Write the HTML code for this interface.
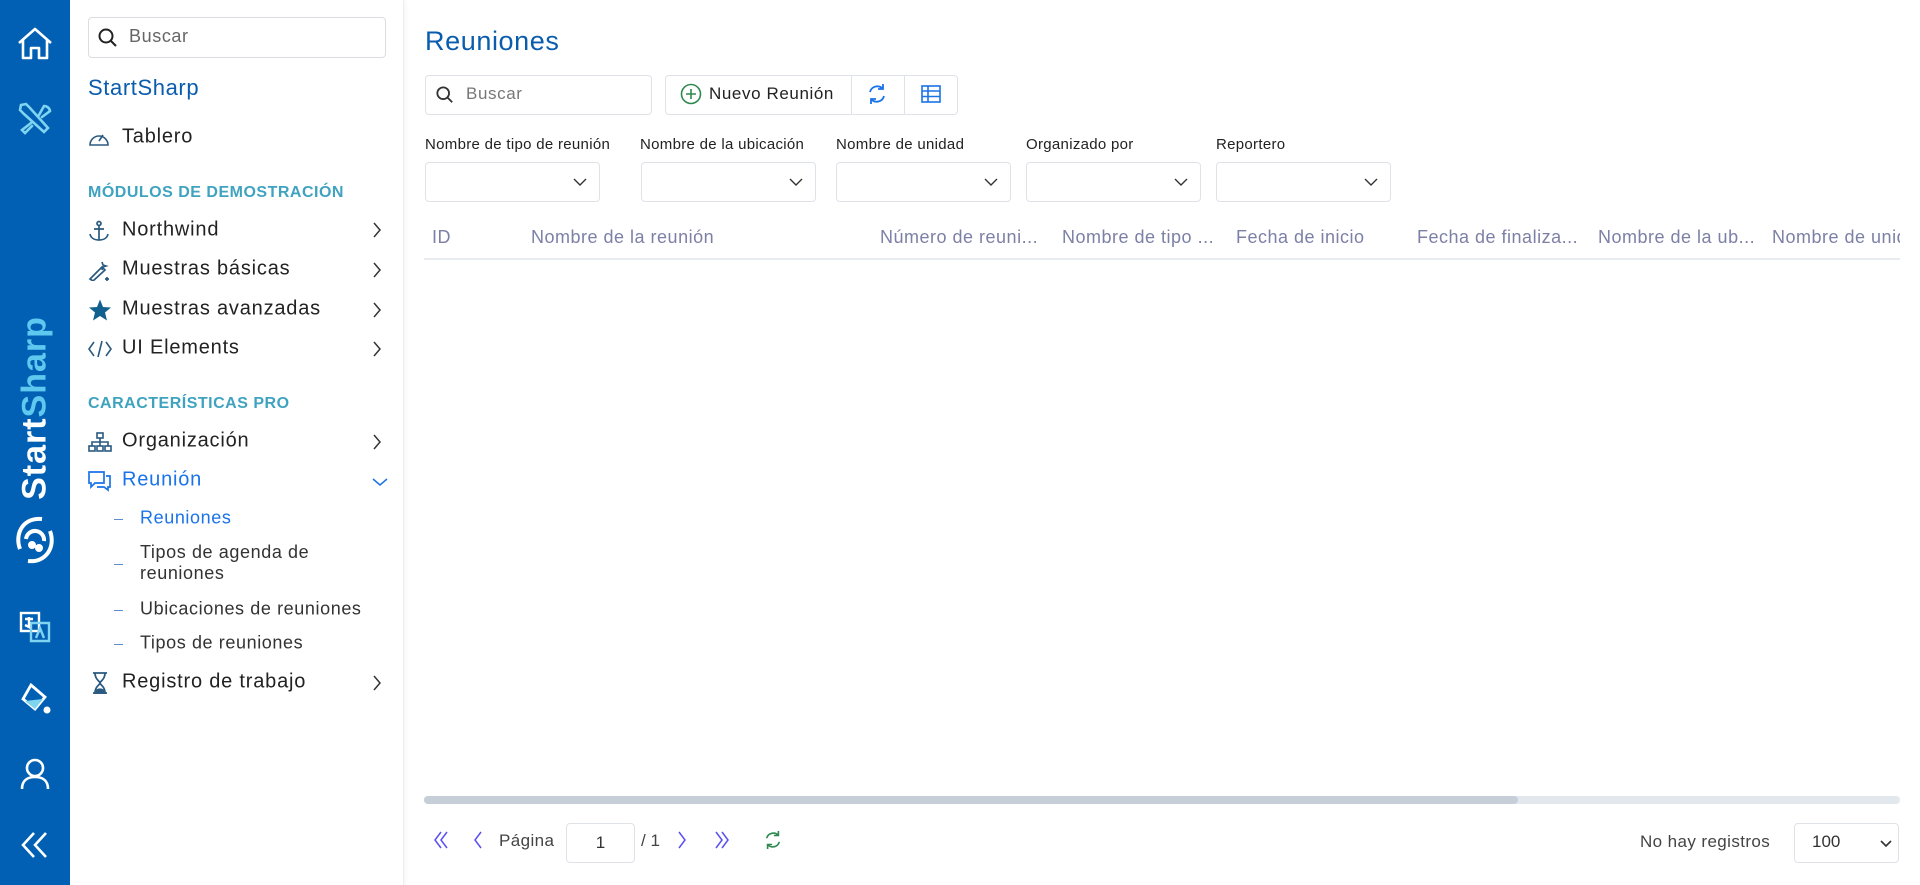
<!DOCTYPE html>
<html><head><meta charset="utf-8">
<style>
*{box-sizing:border-box;margin:0;padding:0}
body{width:1920px;height:885px;overflow:hidden;background:#fff;font-family:"Liberation Sans",sans-serif;position:relative;color:#222}
.abs{position:absolute}
#bar{left:0;top:0;width:70px;height:885px;background:#0160b4}
#side{left:70px;top:0;width:334px;height:885px;background:#fff;border-right:1px solid #eceef2;box-shadow:2px 0 4px rgba(0,0,0,.04)}
.item{position:absolute;left:122px;font-size:20px;letter-spacing:.8px;color:#222;white-space:nowrap;transform:translateY(-50%)}
.ico{position:absolute;left:88px;transform:translateY(-50%)}
.chev{position:absolute;left:372px;transform:translateY(-50%)}
.sec{position:absolute;left:88px;font-size:16px;font-weight:bold;color:#3fa3c0;transform:translateY(-50%);letter-spacing:.5px}
.sub{position:absolute;left:140px;font-size:18px;letter-spacing:.6px;color:#333;transform:translateY(-50%);line-height:21px}
.dash{position:absolute;left:114px;width:9px;height:1px;background:#5b8ed0}
.lbl{position:absolute;top:136px;font-size:15px;letter-spacing:.3px;color:#222;white-space:nowrap}
.sel{position:absolute;top:162px;height:40px;width:175px;border:1px solid #dfe2e6;border-radius:4px}
.sel svg{position:absolute;right:12px;top:14px}
.th{position:absolute;top:227px;font-size:18px;letter-spacing:.5px;color:#7c80a6;white-space:nowrap}
</style></head><body>
<div id="bar" class="abs">
 <svg class="abs" style="left:17px;top:27px" width="36" height="34" viewBox="0 0 36 34" fill="none" stroke="#fff" stroke-width="2.6" stroke-linejoin="round"><path d="M2 16 L18 2 L34 16 M6 13 V31 H14 V21 H22 V31 H30 V13"/></svg>
 <svg class="abs" style="left:17px;top:101px" width="36" height="36" viewBox="0 0 36 36" fill="none" stroke="#7fd4f0" stroke-width="2.6" stroke-linecap="round"><path d="M4 4 L9 3 L13 7 L31 27 L27 31 L7 13 L3 9Z M22 14 L27 5 a6 6 0 0 1 6 5 L25 16 M14 22 L5 29 L8 32 L15 25"/></svg>
 <div class="abs" style="left:35px;top:408px;transform:translate(-50%,-50%) rotate(-90deg);font-size:34px;letter-spacing:1px;font-weight:bold;white-space:nowrap;color:#fff">Start<span style="color:#5ec8ef">Sharp</span></div>
 <svg class="abs" style="left:12px;top:515px" width="46" height="50" viewBox="0 0 46 50" fill="none" stroke="#fff" stroke-width="4"><path d="M30 4 C12 2 2 18 8 34 M16 46 C34 48 44 32 38 16 M14 24 a9 9 0 0 1 18 2"/><circle cx="20" cy="30" r="2" fill="#fff"/><circle cx="27" cy="33" r="2" fill="#fff"/></svg>
 <svg class="abs" style="left:19px;top:611px" width="32" height="32" viewBox="0 0 32 32" fill="none" stroke="#fff" stroke-width="2.4"><rect x="2" y="2" width="18" height="18"/><path d="M12 12 H30 V30 H12 Z" stroke="#7fd4f0"/><path d="M6 8 H14 M10 6 V16 L6 14" /><path d="M17 27 L21 17 L25 27" stroke="#7fd4f0"/></svg>
 <svg class="abs" style="left:19px;top:683px" width="34" height="34" viewBox="0 0 34 34" fill="none" stroke="#fff" stroke-width="2.8"><path d="M12 2 L26 14 L16 26 L4 16 Z"/><path d="M6 18 L16 26 L24 16 Z" fill="#7fd4f0" stroke="none"/><circle cx="28" cy="27" r="3.5" fill="#fff" stroke="none"/></svg>
 <svg class="abs" style="left:20px;top:758px" width="30" height="32" viewBox="0 0 30 32" fill="none" stroke="#fff" stroke-width="2.6"><circle cx="15" cy="10" r="8"/><path d="M2 31 C2 22 8 19 15 19 C22 19 28 22 28 31"/></svg>
 <svg class="abs" style="left:20px;top:831px" width="30" height="28" viewBox="0 0 30 28" fill="none" stroke="#fff" stroke-width="2.6"><path d="M14 2 L3 14 L14 26 M26 2 L15 14 L26 26"/></svg>
</div>
<div id="side" class="abs"></div>
<div class="abs" style="left:88px;top:17px;width:298px;height:41px;border:1px solid #dadde2;border-radius:4px"></div>
<svg class="abs" style="left:98px;top:28px" width="20" height="20" viewBox="0 0 20 20" fill="none" stroke="#222" stroke-width="2"><circle cx="8" cy="8" r="6.5"/><path d="M13 13 L18 18"/></svg>
<div class="abs" style="left:129px;top:26px;font-size:18px;letter-spacing:.6px;color:#666">Buscar</div>
<div class="abs" style="left:88px;top:75px;font-size:22px;letter-spacing:.6px;color:#0a5cac">StartSharp</div>
<svg class="ico" style="top:138px" width="22" height="18" viewBox="0 0 22 18" fill="none" stroke="#2a5a80" stroke-width="1.6"><path d="M2 16 A9 9 0 1 1 20 16 Z M11 12 L15 6"/></svg>
<div class="item" style="top:137px">Tablero</div>
<div class="sec" style="top:193px">MÓDULOS DE DEMOSTRACIÓN</div>
<svg class="ico" style="top:231px" width="22" height="22" viewBox="0 0 22 22" fill="none" stroke="#2a5a80" stroke-width="1.7"><circle cx="11" cy="3.5" r="2"/><path d="M11 6 V20 M6 9 H16 M2 14 C3 19 8 20 11 20 C14 20 19 19 20 14"/></svg>
<div class="item" style="top:230px">Northwind</div>
<svg class="ico" style="top:270px" width="22" height="22" viewBox="0 0 22 22" fill="none" stroke="#2a5a80" stroke-width="1.7"><path d="M2 20 L14 8 L17 11 L5 22 Z M14 3 L15 6 L18 7 L15 8 L14 11 M19 18 V22 M17 20 H21"/></svg>
<div class="item" style="top:269px">Muestras básicas</div>
<svg class="ico" style="top:310px" width="24" height="23" viewBox="0 0 24 23"><path d="M12 1 L15 8.5 L23 9 L17 14 L19 22 L12 17.5 L5 22 L7 14 L1 9 L9 8.5Z" fill="#11608e"/></svg>
<div class="item" style="top:309px">Muestras avanzadas</div>
<svg class="ico" style="top:349px" width="24" height="20" viewBox="0 0 24 20" fill="none" stroke="#2a5a80" stroke-width="1.6"><path d="M6 3 L1 10 L6 17 M18 3 L23 10 L18 17 M14 2 L10 18"/></svg>
<div class="item" style="top:348px">UI Elements</div>
<div class="sec" style="top:404px">CARACTERÍSTICAS PRO</div>
<svg class="ico" style="top:442px" width="24" height="20" viewBox="0 0 24 20" fill="none" stroke="#2a5a80" stroke-width="1.6"><rect x="9" y="1" width="6" height="5"/><rect x="1" y="14" width="6" height="5"/><rect x="9" y="14" width="6" height="5"/><rect x="17" y="14" width="6" height="5"/><path d="M12 6 V14 M4 14 V10 H20 V14"/></svg>
<div class="item" style="top:441px">Organización</div>
<svg class="ico" style="top:481px" width="24" height="22" viewBox="0 0 24 22" fill="none" stroke="#1a73e8" stroke-width="1.7"><path d="M1 2 H16 V13 H7 L3 17 V13 H1Z M18 6 H22 V17 H20 V20 L16 17 H9"/></svg>
<div class="item" style="top:480px;color:#1a73e8">Reunión</div>
<div class="dash" style="top:519px"></div><div class="sub" style="top:518px;color:#1a73e8">Reuniones</div>
<div class="dash" style="top:564px"></div><div class="sub" style="top:563px">Tipos de agenda de<br>reuniones</div>
<div class="dash" style="top:610px"></div><div class="sub" style="top:609px">Ubicaciones de reuniones</div>
<div class="dash" style="top:644px"></div><div class="sub" style="top:643px">Tipos de reuniones</div>
<svg class="ico" style="top:683px;left:92px" width="16" height="22" viewBox="0 0 16 22" fill="none" stroke="#2a5a80" stroke-width="1.8"><path d="M1 1 H15 M1 21 H15 M3 1 C3 8 8 9 8 11 C8 13 3 14 3 21 M13 1 C13 8 8 9 8 11 C8 13 13 14 13 21"/><path d="M3 21 C4 16 12 16 13 21Z" fill="#2a5a80"/></svg>
<div class="item" style="top:682px">Registro de trabajo</div>
<svg class="chev" style="top:230px" width="10" height="16" viewBox="0 0 10 16" fill="none" stroke="#333" stroke-width="1.5"><path d="M2 1 L8 8 L2 15"/></svg>
<svg class="chev" style="top:270px" width="10" height="16" viewBox="0 0 10 16" fill="none" stroke="#333" stroke-width="1.5"><path d="M2 1 L8 8 L2 15"/></svg>
<svg class="chev" style="top:310px" width="10" height="16" viewBox="0 0 10 16" fill="none" stroke="#333" stroke-width="1.5"><path d="M2 1 L8 8 L2 15"/></svg>
<svg class="chev" style="top:349px" width="10" height="16" viewBox="0 0 10 16" fill="none" stroke="#333" stroke-width="1.5"><path d="M2 1 L8 8 L2 15"/></svg>
<svg class="chev" style="top:442px" width="10" height="16" viewBox="0 0 10 16" fill="none" stroke="#333" stroke-width="1.5"><path d="M2 1 L8 8 L2 15"/></svg>
<svg class="chev" style="top:482px;left:372px" width="16" height="10" viewBox="0 0 16 10" fill="none" stroke="#1a73e8" stroke-width="1.5"><path d="M1 2 L8 8 L15 2"/></svg>
<svg class="chev" style="top:683px" width="10" height="16" viewBox="0 0 10 16" fill="none" stroke="#333" stroke-width="1.5"><path d="M2 1 L8 8 L2 15"/></svg>

<div class="abs" style="left:425px;top:26px;font-size:27px;letter-spacing:.6px;color:#0a5cac">Reuniones</div>
<div class="abs" style="left:425px;top:75px;width:227px;height:40px;border:1px solid #dfe2e6;border-radius:4px"></div>
<svg class="abs" style="left:436px;top:86px" width="18" height="18" viewBox="0 0 20 20" fill="none" stroke="#333" stroke-width="2"><circle cx="8" cy="8" r="6.5"/><path d="M13 13 L18 18"/></svg>
<div class="abs" style="left:466px;top:84px;font-size:17px;letter-spacing:.6px;color:#777">Buscar</div>
<div class="abs" style="left:665px;top:75px;width:293px;height:40px;border:1px solid #dfe2e6;border-radius:4px"></div>
<div class="abs" style="left:851px;top:75px;width:1px;height:40px;background:#dfe2e6"></div>
<div class="abs" style="left:904px;top:75px;width:1px;height:40px;background:#dfe2e6"></div>
<svg class="abs" style="left:680px;top:83px" width="22" height="22" viewBox="0 0 22 22" fill="none" stroke="#2e8a4e" stroke-width="1.6"><circle cx="11" cy="11" r="9.5"/><path d="M11 6 V16 M6 11 H16"/></svg>
<div class="abs" style="left:709px;top:84px;font-size:17px;letter-spacing:.6px;color:#222">Nuevo Reunión</div>
<svg class="abs" style="left:867px;top:83px" width="20" height="22" viewBox="0 0 20 22" fill="none" stroke="#1a73e8" stroke-width="1.8"><path d="M3 9 A7.5 7.5 0 0 1 16 6 M17 13 A7.5 7.5 0 0 1 4 16 M16 1 V6 H11 M4 21 V16 H9"/></svg>
<svg class="abs" style="left:921px;top:85px" width="20" height="18" viewBox="0 0 20 18" fill="none" stroke="#1a73e8" stroke-width="1.6"><rect x="1" y="1" width="18" height="16"/><path d="M1 6 H19 M1 11.5 H19 M7 1 V17"/></svg>

<div class="lbl" style="left:425px">Nombre de tipo de reunión</div>
<div class="lbl" style="left:640px">Nombre de la ubicación</div>
<div class="lbl" style="left:836px">Nombre de unidad</div>
<div class="lbl" style="left:1026px">Organizado por</div>
<div class="lbl" style="left:1216px">Reportero</div>
<div class="sel" style="left:425px"><svg width="14" height="10" viewBox="0 0 14 10" fill="none" stroke="#333" stroke-width="1.4"><path d="M1 2 L7 8 L13 2"/></svg></div>
<div class="sel" style="left:641px"><svg width="14" height="10" viewBox="0 0 14 10" fill="none" stroke="#333" stroke-width="1.4"><path d="M1 2 L7 8 L13 2"/></svg></div>
<div class="sel" style="left:836px"><svg width="14" height="10" viewBox="0 0 14 10" fill="none" stroke="#333" stroke-width="1.4"><path d="M1 2 L7 8 L13 2"/></svg></div>
<div class="sel" style="left:1026px"><svg width="14" height="10" viewBox="0 0 14 10" fill="none" stroke="#333" stroke-width="1.4"><path d="M1 2 L7 8 L13 2"/></svg></div>
<div class="sel" style="left:1216px"><svg width="14" height="10" viewBox="0 0 14 10" fill="none" stroke="#333" stroke-width="1.4"><path d="M1 2 L7 8 L13 2"/></svg></div>

<div class="th" style="left:432px">ID</div>
<div class="th" style="left:531px">Nombre de la reunión</div>
<div class="th" style="left:880px">Número de reuni...</div>
<div class="th" style="left:1062px">Nombre de tipo ...</div>
<div class="th" style="left:1236px">Fecha de inicio</div>
<div class="th" style="left:1417px">Fecha de finaliza...</div>
<div class="th" style="left:1598px">Nombre de la ub...</div>
<div class="th" style="left:1772px;width:128px;overflow:hidden">Nombre de unidad</div>
<div class="abs" style="left:424px;top:258px;width:1476px;height:2px;background:#e8ebef"></div>

<div class="abs" style="left:424px;top:796px;width:1476px;height:8px;background:#e3e7ee;border-radius:4px"></div>
<div class="abs" style="left:424px;top:796px;width:1094px;height:8px;background:#c6ced8;border-radius:4px"></div>

<svg class="abs" style="left:432px;top:831px" width="18" height="18" viewBox="0 0 18 18" fill="none" stroke="#5a4ff0" stroke-width="1.5"><path d="M9 1 L3 9 L9 17 M15 1 L9 9 L15 17"/></svg>
<svg class="abs" style="left:473px;top:831px" width="10" height="18" viewBox="0 0 10 18" fill="none" stroke="#5a4ff0" stroke-width="1.5"><path d="M8 1 L2 9 L8 17"/></svg>
<div class="abs" style="left:499px;top:831px;font-size:17px;letter-spacing:.4px;color:#444">Página</div>
<div class="abs" style="left:566px;top:823px;width:69px;height:40px;border:1px solid #dfe2e6;border-radius:4px;font-size:17px;color:#333;text-align:center;line-height:38px">1</div>
<div class="abs" style="left:641px;top:831px;font-size:17px;color:#444">/ 1</div>
<svg class="abs" style="left:677px;top:831px" width="10" height="18" viewBox="0 0 10 18" fill="none" stroke="#5a4ff0" stroke-width="1.5"><path d="M2 1 L8 9 L2 17"/></svg>
<svg class="abs" style="left:713px;top:831px" width="18" height="18" viewBox="0 0 18 18" fill="none" stroke="#5a4ff0" stroke-width="1.5"><path d="M3 1 L9 9 L3 17 M9 1 L15 9 L9 17"/></svg>
<svg class="abs" style="left:764px;top:830px" width="18" height="20" viewBox="0 0 20 22" fill="none" stroke="#2e8a4e" stroke-width="1.8"><path d="M3 9 A7.5 7.5 0 0 1 16 6 M17 13 A7.5 7.5 0 0 1 4 16 M16 1 V6 H11 M4 21 V16 H9"/></svg>
<div class="abs" style="left:1640px;top:832px;font-size:17px;letter-spacing:.4px;color:#444">No hay registros</div>
<div class="abs" style="left:1794px;top:823px;width:105px;height:40px;border:1px solid #dfe2e6;border-radius:4px"></div>
<div class="abs" style="left:1812px;top:832px;font-size:17px;color:#333">100</div>
<svg class="abs" style="left:1880px;top:840px" width="12" height="8" viewBox="0 0 12 8" fill="none" stroke="#333" stroke-width="1.6"><path d="M1 1 L6 6 L11 1"/></svg>
</body></html>
